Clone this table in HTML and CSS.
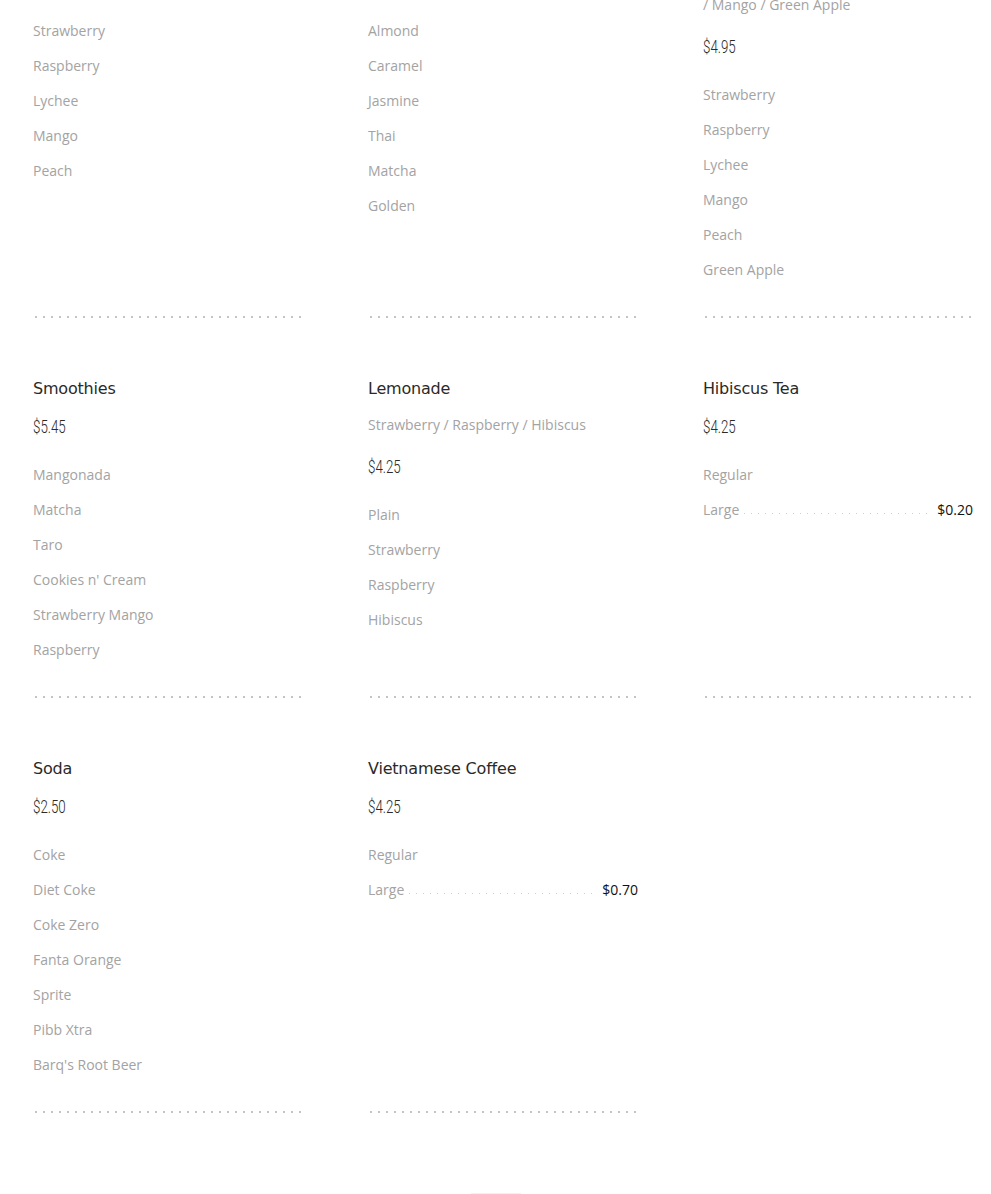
FILE: index.html
```html
<!DOCTYPE html>
<html lang="en">
<head>
<meta charset="utf-8">
<title>Menu</title>
<link rel="stylesheet" href="styles.css">
</head>
<body>
<main class="menu">
  <section class="card">
    <h2 class="title">Fruit Tea</h2>
    <div class="price"><span>$4.95</span></div>
    <ul class="items">
      <li>Strawberry</li>
      <li>Raspberry</li>
      <li>Lychee</li>
      <li>Mango</li>
      <li>Peach</li>
    </ul>
    <div class="sep"></div>
  </section>
  <section class="card">
    <h2 class="title">Milk Tea</h2>
    <div class="price"><span>$4.95</span></div>
    <ul class="items">
      <li>Almond</li>
      <li>Caramel</li>
      <li>Jasmine</li>
      <li>Thai</li>
      <li>Matcha</li>
      <li>Golden</li>
    </ul>
    <div class="sep"></div>
  </section>
  <section class="card">
    <h2 class="title">Slush</h2>
    <p class="desc">Strawberry / Raspberry / Lychee / Peach<br>/ Mango / Green Apple</p>
    <div class="price"><span>$4.95</span></div>
    <ul class="items">
      <li>Strawberry</li>
      <li>Raspberry</li>
      <li>Lychee</li>
      <li>Mango</li>
      <li>Peach</li>
      <li>Green Apple</li>
    </ul>
    <div class="sep"></div>
  </section>

  <section class="card">
    <h2 class="title">Smoothies</h2>
    <div class="price"><span>$5.45</span></div>
    <ul class="items">
      <li>Mangonada</li>
      <li>Matcha</li>
      <li>Taro</li>
      <li>Cookies n' Cream</li>
      <li>Strawberry Mango</li>
      <li>Raspberry</li>
    </ul>
    <div class="sep"></div>
  </section>
  <section class="card">
    <h2 class="title">Lemonade</h2>
    <p class="desc">Strawberry / Raspberry / Hibiscus</p>
    <div class="price"><span>$4.25</span></div>
    <ul class="items">
      <li>Plain</li>
      <li>Strawberry</li>
      <li>Raspberry</li>
      <li>Hibiscus</li>
    </ul>
    <div class="sep"></div>
  </section>
  <section class="card">
    <h2 class="title">Hibiscus Tea</h2>
    <div class="price"><span>$4.25</span></div>
    <ul class="items">
      <li>Regular</li>
      <li class="leader"><span>Large</span><span class="dots"></span><span class="extra">$0.20</span></li>
    </ul>
    <div class="sep"></div>
  </section>

  <section class="card">
    <h2 class="title">Soda</h2>
    <div class="price"><span>$2.50</span></div>
    <ul class="items">
      <li>Coke</li>
      <li>Diet Coke</li>
      <li>Coke Zero</li>
      <li>Fanta Orange</li>
      <li>Sprite</li>
      <li>Pibb Xtra</li>
      <li>Barq's Root Beer</li>
    </ul>
    <div class="sep"></div>
  </section>
  <section class="card">
    <h2 class="title">Vietnamese Coffee</h2>
    <div class="price"><span>$4.25</span></div>
    <ul class="items">
      <li>Regular</li>
      <li class="leader"><span>Large</span><span class="dots"></span><span class="extra">$0.70</span></li>
    </ul>
    <div class="sep"></div>
  </section>
</main>
<footer class="foot"><div class="foot-mark"></div></footer>
</body>
</html>
```

FILE: styles.css
```css
html, body {
  margin: 0;
  padding: 0;
  background: #ffffff;
}

body {
  font-family: "Open Sans", "Noto Sans", sans-serif;
  overflow: hidden;
}

.menu {
  display: grid;
  grid-template-columns: repeat(3, 270px);
  column-gap: 65px;
  row-gap: 59px;
  margin: -67px 0 0 33px;
}

.card {
  display: flex;
  flex-direction: column;
}

.title {
  margin: 0 0 12px;
  font-family: "DejaVu Sans", sans-serif;
  font-weight: normal;
  font-size: 16px;
  line-height: 24px;
  color: #2a2a2a;
  letter-spacing: -0.2px;
}

.desc {
  margin: 0 0 16px;
  font-size: 14px;
  line-height: 24px;
  color: #a3a3a3;
}

.price {
  margin-top: 2px;
  height: 24px;
  font-family: "Roboto", "Liberation Sans", sans-serif;
  font-weight: 300;
  font-size: 18px;
  line-height: 24px;
  color: #2a2a2a;
}

.price span {
  display: inline-block;
  transform: scaleX(0.74);
  transform-origin: 0 50%;
}

.items {
  list-style: none;
  margin: 18px 0 0;
  padding: 0 0 29px;
}

.items li {
  font-size: 14px;
  line-height: 35px;
  height: 35px;
  color: #a3a3a3;
}

.leader {
  display: flex;
  align-items: baseline;
}

.dots {
  flex: 1;
  margin: 0 6px 0 5px;
  height: 2px;
  background-image: linear-gradient(to right, #d0d0d0 1px, transparent 1px);
  background-size: 7px 1px;
  background-repeat: repeat-x;
  background-position: 0 0;
}

.extra {
  color: #111111;
}

.sep {
  margin-top: auto;
  height: 2px;
  background-image: linear-gradient(to right, #c4c4c4 2px, transparent 2px);
  background-size: 8px 2px;
  background-repeat: repeat-x;
  background-position: 2px 0;
}

.foot {
  display: flex;
  justify-content: center;
  padding-top: 80px;
}

.foot-mark {
  width: 50px;
  height: 3px;
  background: #f1f1f1;
}
```
